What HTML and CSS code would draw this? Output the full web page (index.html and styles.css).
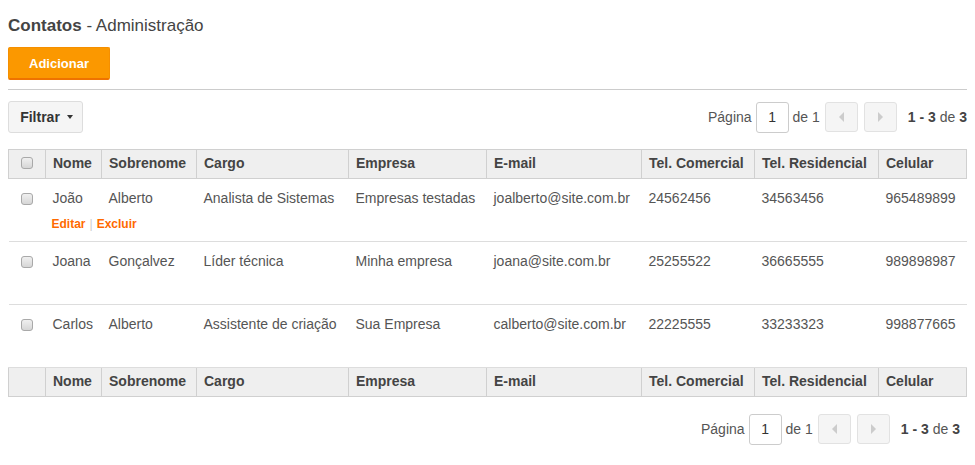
FILE: index.html
```html
<!DOCTYPE html>
<html lang="pt-br">
<head>
    <meta charset="UTF-8">
    <meta name="viewport" content="width=device-width, initial-scale=1.0">
    <title>Contatos - Administração</title>
    <link rel="stylesheet" href="styles.css">
</head>
<body>
    <h1 class="titulo"><strong>Contatos</strong> - Administração</h1>
    <button class="btn-adicionar">Adicionar</button>
    <hr class="divisor">

    <div class="barra">
        <button class="btn-filtrar">Filtrar <span class="seta"></span></button>
        <div class="paginacao">
            <span>Página</span>
            <input class="pagina" type="text" value="1">
            <span>de 1</span>
            <button class="nav"><span class="tri-esq"></span></button>
            <button class="nav"><span class="tri-dir"></span></button>
            <span class="total"><b>1 - 3</b> de <b>3</b></span>
        </div>
    </div>

    <table class="contatos">
        <colgroup>
            <col style="width:37px">
            <col style="width:56px">
            <col style="width:95px">
            <col style="width:152px">
            <col style="width:138px">
            <col style="width:155px">
            <col style="width:113px">
            <col style="width:124px">
            <col>
        </colgroup>
        <thead>
            <tr>
                <th class="chk"><span class="caixa"></span></th>
                <th>Nome</th>
                <th>Sobrenome</th>
                <th>Cargo</th>
                <th>Empresa</th>
                <th>E-mail</th>
                <th>Tel. Comercial</th>
                <th>Tel. Residencial</th>
                <th>Celular</th>
            </tr>
        </thead>
        <tbody>
            <tr>
                <td class="chk"><span class="caixa"></span></td>
                <td>João
                    <div class="acoes"><a href="#">Editar</a><span class="sep">|</span><a href="#">Excluir</a></div>
                </td>
                <td>Alberto</td>
                <td>Analista de Sistemas</td>
                <td>Empresas testadas</td>
                <td>joalberto@site.com.br</td>
                <td>24562456</td>
                <td>34563456</td>
                <td>965489899</td>
            </tr>
            <tr>
                <td class="chk"><span class="caixa"></span></td>
                <td>Joana
                    <div class="acoes oculto"><a href="#">Editar</a><span class="sep">|</span><a href="#">Excluir</a></div>
                </td>
                <td>Gonçalvez</td>
                <td>Líder técnica</td>
                <td>Minha empresa</td>
                <td>joana@site.com.br</td>
                <td>25255522</td>
                <td>36665555</td>
                <td>989898987</td>
            </tr>
            <tr>
                <td class="chk"><span class="caixa"></span></td>
                <td>Carlos
                    <div class="acoes oculto"><a href="#">Editar</a><span class="sep">|</span><a href="#">Excluir</a></div>
                </td>
                <td>Alberto</td>
                <td>Assistente de criação</td>
                <td>Sua Empresa</td>
                <td>calberto@site.com.br</td>
                <td>22225555</td>
                <td>33233323</td>
                <td>998877665</td>
            </tr>
        </tbody>
        <tfoot>
            <tr>
                <th class="chk"></th>
                <th>Nome</th>
                <th>Sobrenome</th>
                <th>Cargo</th>
                <th>Empresa</th>
                <th>E-mail</th>
                <th>Tel. Comercial</th>
                <th>Tel. Residencial</th>
                <th>Celular</th>
            </tr>
        </tfoot>
    </table>

    <div class="barra rodape">
        <div class="paginacao">
            <span>Página</span>
            <input class="pagina" type="text" value="1">
            <span>de 1</span>
            <button class="nav"><span class="tri-esq"></span></button>
            <button class="nav"><span class="tri-dir"></span></button>
            <span class="total"><b>1 - 3</b> de <b>3</b></span>
        </div>
    </div>
</body>
</html>
```

FILE: styles.css
```css
body {
    font-family: "Liberation Sans", Arial, sans-serif;
    font-size: 14px;
    color: #555;
    margin: 8px;
}
.titulo {
    font-size: 17px;
    font-weight: normal;
    color: #444;
    margin: 6px 0 0;
    line-height: 23px;
}
.titulo strong {
    font-weight: bold;
}
.btn-adicionar {
    display: block;
    margin-top: 10px;
    width: 102px;
    height: 33px;
    background-color: #fb9800;
    color: white;
    font-family: inherit;
    font-size: 13px;
    font-weight: bold;
    border: 1px solid #f58f00;
    border-bottom: 2px solid #ef7300;
    border-radius: 2px;
    padding: 0;
    cursor: pointer;
}
.divisor {
    border: none;
    border-top: 1px solid #ccc;
    margin: 9px 0 11px;
}
.barra {
    display: flex;
    align-items: center;
    justify-content: space-between;
    height: 32px;
}
.btn-filtrar {
    height: 32px;
    width: 75px;
    background: #f5f5f5;
    border: 1px solid #ddd;
    border-radius: 3px;
    font-family: inherit;
    font-size: 14px;
    font-weight: bold;
    color: #333;
    padding: 0 0 0 2px;
    display: flex;
    align-items: center;
    justify-content: center;
    gap: 4px;
}
.seta {
    width: 0;
    height: 0;
    border-left: 3px solid transparent;
    border-right: 3px solid transparent;
    border-top: 4px solid #333;
    margin-left: 3px;
}
.paginacao {
    display: flex;
    align-items: center;
    margin-left: auto;
}
.pagina {
    width: 33px;
    height: 31px;
    box-sizing: border-box;
    margin: 0 4px;
    border: 1px solid #ccc;
    border-radius: 3px;
    text-align: center;
    font-family: inherit;
    font-size: 14px;
    color: #333;
    padding: 0;
}
.nav {
    width: 33px;
    height: 30px;
    margin-left: 5px;
    background: #f5f5f5;
    border: 1px solid #e2e2e2;
    border-radius: 3px;
    padding: 0;
    display: flex;
    align-items: center;
    justify-content: center;
}
.nav + .nav {
    margin-left: 6px;
}
.tri-esq {
    border-top: 5px solid transparent;
    border-bottom: 5px solid transparent;
    border-right: 5px solid #ccc;
}
.tri-dir {
    border-top: 5px solid transparent;
    border-bottom: 5px solid transparent;
    border-left: 5px solid #ccc;
}
.total {
    margin-left: 11px;
}
.total b {
    color: #444;
}
.contatos {
    width: 100%;
    border-collapse: collapse;
    table-layout: fixed;
    margin-top: 16px;
}
.contatos th {
    background: #efefef;
    border: 1px solid #d0d0d0;
    text-align: left;
    font-weight: bold;
    color: #444;
    padding: 3px 7px 5px;
    line-height: 20px;
    white-space: nowrap;
}
.contatos td {
    vertical-align: top;
    padding: 9px 7px 8px;
    line-height: 20px;
    border-bottom: 1px solid #ddd;
    white-space: nowrap;
}
.contatos .chk {
    text-align: center;
    padding-left: 0;
    padding-right: 0;
}
.caixa {
    display: inline-block;
    width: 10px;
    height: 10px;
    border: 1px solid #a9a9a9;
    border-radius: 3px;
    background: linear-gradient(#f0f0f0, #d6d6d6);
    vertical-align: middle;
    margin-top: -2px;
}
td.chk .caixa {
    margin-top: 0;
}
.acoes {
    margin-top: 7px;
    line-height: 18px;
    font-size: 12px;
    font-weight: bold;
    margin-left: -1px;
}
.acoes a {
    color: #ff6a00;
    text-decoration: none;
}
.sep {
    color: #ccc;
    font-weight: normal;
    margin: 0 4px;
}
.oculto {
    visibility: hidden;
}
.rodape {
    margin-top: 16px;
    padding-right: 7px;
}
```
